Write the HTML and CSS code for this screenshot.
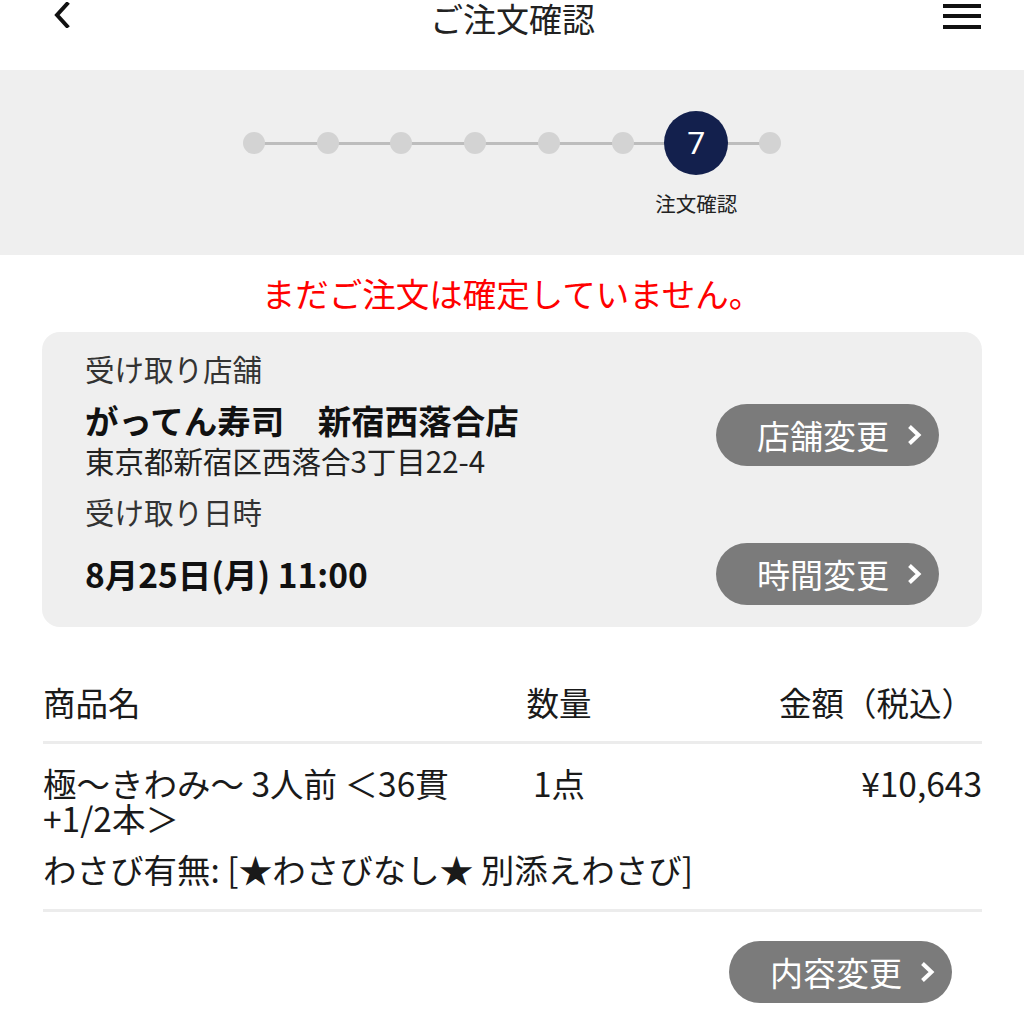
FILE: index.html
```html
<!DOCTYPE html>
<html lang="ja">
<head>
<meta charset="utf-8">
<title>ご注文確認</title>
<link rel="stylesheet" href="styles.css">
</head>
<body>
<header class="topbar">
  <span class="back" aria-label="戻る">
    <svg width="18" height="26" viewBox="0 0 18 26"><path d="M14 2 L4 13 L14 24" fill="none" stroke="#111" stroke-width="4" stroke-linecap="square"/></svg>
  </span>
  <h1 class="title">ご注文確認</h1>
  <span class="menu" aria-label="メニュー">
    <svg width="40" height="30" viewBox="0 0 40 30"><path d="M1 6 H39 M1 16 H39 M1 27 H39" stroke="#111" stroke-width="4"/></svg>
  </span>
</header>

<section class="band">
  <div class="steps">
    <span class="step"><span class="dot"></span></span>
    <span class="step"><span class="dot"></span></span>
    <span class="step"><span class="dot"></span></span>
    <span class="step"><span class="dot"></span></span>
    <span class="step"><span class="dot"></span></span>
    <span class="step"><span class="dot"></span></span>
    <span class="step active"><span class="dot">7</span><span class="step-label">注文確認</span></span>
    <span class="step"><span class="dot"></span></span>
  </div>
</section>

<p class="notice">まだご注文は確定していません。</p>

<section class="card">
  <div class="label">受け取り店舗</div>
  <div class="card-row top">
    <div>
      <div class="strong">がってん寿司　新宿西落合店</div>
      <div class="addr">東京都新宿区西落合3丁目22-4</div>
    </div>
    <a class="pill">店舗変更<svg class="chev" width="17" height="24" viewBox="0 0 17 24"><path d="M3.5 3.5 L12.5 12 L3.5 20.5" fill="none" stroke="#fff" stroke-width="4"/></svg></a>
  </div>
  <div class="label label2">受け取り日時</div>
  <div class="card-row mid">
    <div class="strong">8月25日(月) 11:00</div>
    <a class="pill">時間変更<svg class="chev" width="17" height="24" viewBox="0 0 17 24"><path d="M3.5 3.5 L12.5 12 L3.5 20.5" fill="none" stroke="#fff" stroke-width="4"/></svg></a>
  </div>
</section>

<section class="items">
  <div class="grid head">
    <div>商品名</div>
    <div class="qty">数量</div>
    <div class="price head-price">金額（税込）</div>
  </div>
  <div class="grid row">
    <div class="name">極〜きわみ〜 3人前 ＜36貫<span class="nowrap">+1/2本＞</span></div>
    <div class="qty">1点</div>
    <div class="price">¥10,643</div>
    <div class="opt">わさび有無: [★わさびなし★ 別添えわさび]</div>
  </div>
  <div class="actions">
    <a class="pill">内容変更<svg class="chev" width="17" height="24" viewBox="0 0 17 24"><path d="M3.5 3.5 L12.5 12 L3.5 20.5" fill="none" stroke="#fff" stroke-width="4"/></svg></a>
  </div>
</section>
</body>
</html>
```

FILE: styles.css
```css
* { box-sizing: border-box; }
html, body { margin: 0; padding: 0; background: #fff; }
body {
  width: 1024px;
  font-family: "Noto Sans CJK JP", "Noto Sans", sans-serif;
  color: #1a1a1a;
}

.topbar {
  height: 70px;
  display: flex;
  justify-content: space-between;
  align-items: flex-start;
  padding: 0 42px 0 53px;
}
.back { margin-top: 2px; display: block; line-height: 0; }
.menu { display: block; line-height: 0; }
.title {
  margin: 0;
  font-size: 33px;
  font-weight: 400;
  line-height: 36px;
  color: #222;
  margin-left: 12px;
}

.band {
  background: #efefef;
  height: 185px;
  padding-top: 41px;
}
.steps {
  position: relative;
  display: flex;
  justify-content: center;
}
.steps::before {
  content: "";
  position: absolute;
  left: 253px;
  right: 254px;
  top: 31px;
  height: 3px;
  background: #bdbdbd;
}
.step {
  position: relative;
  width: 73.7px;
  height: 64px;
  display: flex;
  align-items: center;
  justify-content: center;
}
.dot {
  position: relative;
  width: 22px;
  height: 22px;
  border-radius: 50%;
  background: #d3d3d3;
}
.step.active .dot {
  width: 64px;
  height: 64px;
  background: #13204d;
  color: #fff;
  font-family: Roboto, "Noto Sans", sans-serif;
  font-size: 32px;
  line-height: 64px;
  text-align: center;
}
.step-label {
  position: absolute;
  top: 80px;
  left: 50%;
  transform: translateX(-50%);
  white-space: nowrap;
  font-size: 20.5px;
  line-height: 24px;
  color: #222;
}

.notice {
  margin: 14px 0 0;
  text-align: center;
  color: #ff0000;
  font-size: 33.5px;
  line-height: 48px;
}

.card {
  margin: 15px 42px 0;
  background: #efefef;
  border-radius: 18px;
  padding: 17px 43px 22px;
}
.label {
  font-size: 29.5px;
  line-height: 38px;
  color: #333;
}
.label2 { margin-top: 12px; }
.card-row {
  display: flex;
  justify-content: space-between;
}
.card-row.top { align-items: flex-start; margin-top: 13px; }
.card-row.top .pill { margin-top: 4px; }
.card-row.mid { align-items: center; margin-top: 13px; }
.strong {
  font-size: 33.5px;
  font-weight: 700;
  line-height: 40px;
  color: #111;
}
.addr {
  font-size: 29.5px;
  line-height: 40px;
  color: #222;
}

.pill {
  display: inline-flex;
  align-items: center;
  justify-content: flex-end;
  width: 223px;
  height: 62px;
  padding: 0 16px 0 0;
  border-radius: 31px;
  background: #7b7b7b;
  color: #fff;
  font-size: 33px;
  line-height: 1;
  gap: 17px;
  text-decoration: none;
}
.chev { display: block; }

.items {
  margin: 53px 42px 0 43px;
}
.grid {
  display: grid;
  grid-template-columns: 456px 120px 1fr;
}
.head {
  font-size: 32.5px;
  line-height: 44px;
  padding-bottom: 17px;
  border-bottom: 3px solid #ececec;
}
.qty { text-align: center; }
.price { text-align: right; }
.head-price { padding-right: 8px; }
.row {
  font-size: 33.5px;
  padding-top: 21px;
  padding-bottom: 22px;
  line-height: 35px;
  border-bottom: 3px solid #ececec;
}
.nowrap { white-space: nowrap; }
.row .opt {
  grid-column: 1 / -1;
  margin-top: 16px;
  line-height: 36px;
}
.actions {
  display: flex;
  justify-content: flex-end;
  padding-right: 30px;
  margin-top: 29px;
}
```
